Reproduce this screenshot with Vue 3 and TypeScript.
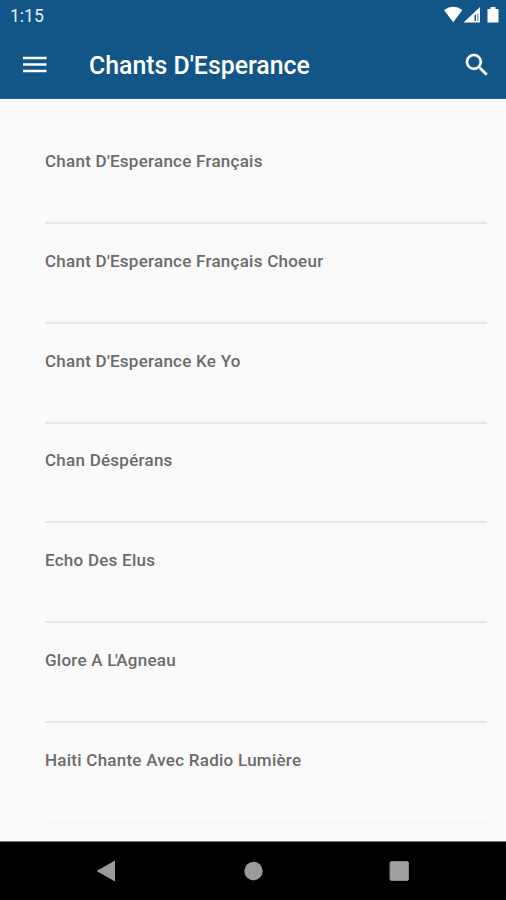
<script setup lang="ts">
interface Song { lead: string; tight?: string; rest?: string }

const songs: Song[] = [
  { lead: "Chant D'Esperance Français" },
  { lead: "Chant D'Esperance Français Choeur" },
  { lead: "Chant D'Esperance Ke Yo" },
  { lead: 'Chan Déspérans' },
  { lead: 'Echo Des Elus' },
  { lead: 'Glore A ', tight: "L'", rest: 'Agneau' },
  { lead: 'Haiti Chante Avec Radio Lumière' },
]
</script>

<template>
  <div class="screen">
    <header class="top">
      <div class="status">
        <span class="time">1:15</span>
        <svg class="signals" width="56" height="18" viewBox="0 0 56 18">
          <path d="M0 4Q9.200-2.500 18.400 4L9.200 16.300Z" fill="#fff" />
          <path fill-rule="evenodd" d="M19.500 16.500L36 1V16.500ZM30.500 9.500V15H32V8ZM33.500 7.500V15H34.300V7.500Z" fill="#fff" />
          <path d="M43.500 3h3V1h5v2h3V16.500H43.500Z" fill="#fff" />
        </svg>
      </div>
      <div class="toolbar">
        <svg class="menu" width="24" height="18" viewBox="0 0 24 18">
          <path d="M0 2H23.500M0 8.500H23.500M0 15H23.500" stroke="#fff" stroke-width="2.600" />
        </svg>
        <h1>Chants D'Esperance</h1>
        <svg class="search" width="30" height="30" viewBox="0 0 24 24">
          <path fill="#fff" stroke="#fff" stroke-width=".2" d="M15.500 14h-.79l-.28-.27A6.470 6.470 0 0 0 16 9.500 6.500 6.500 0 1 0 9.500 16c1.610 0 3.090-.59 4.230-1.570l.27.28v.79l5 4.990L20.490 19l-4.990-5zm-6 0C7.010 14 5 11.990 5 9.500S7.010 5 9.500 5 14 7.010 14 9.500 11.990 14 9.500 14z" />
        </svg>
      </div>
    </header>
    <ul class="list">
      <li v-for="(song, i) in songs" :key="i">{{ song.lead }}<span v-if="song.tight" class="tight">{{ song.tight }}</span>{{ song.rest }}</li>
    </ul>
    <nav class="nav">
      <svg width="20" height="22" viewBox="0 0 20 22"><path d="M.5 11L19 .5V21.500Z" fill="#9b9b9b" /></svg>
      <svg width="20" height="20" viewBox="0 0 20 20"><circle cx="10.500" cy="10" r="9.200" fill="#9b9b9b" /></svg>
      <svg width="20" height="20" viewBox="0 0 20 20"><rect x="1" y=".5" width="18.500" height="19" rx="1.500" fill="#a0a0a0" stroke="#898989" /></svg>
    </nav>
  </div>
</template>

<style>
body { margin: 0; }
</style>

<style scoped>
.screen { width: 506px; height: 900px; display: flex; flex-direction: column; overflow: hidden; background: #fafafa; font-family: Roboto, sans-serif; }
.top { height: 99px; flex: none; background: #125688; color: #fff; border-bottom: 1px solid #2f5f8d; box-sizing: border-box; }
.status { height: 32px; display: flex; justify-content: space-between; align-items: center; padding: 0 6.500px 0 10px; box-sizing: border-box; }
.signals { position: relative; top: -1px; }
.time { font-size: 17.500px; color: #e4edf4; }
.toolbar { height: 65px; display: flex; align-items: center; padding: 0 14px 0 23px; box-sizing: border-box; }
h1 { margin: 1px 0 0 42px; font-size: 24.850px; font-weight: 500; flex: 1; white-space: nowrap; }
.list { list-style: none; margin: 0; padding: 25px 19px 0 45px; flex: 1; min-height: 0; overflow: hidden; }
li { height: 99.850px; box-sizing: border-box; border-bottom: 2px solid #e6e6e6; padding-top: 25.900px; font-size: 17px; letter-spacing: .25px; line-height: 22px; font-weight: 500; color: #6b6b6b; white-space: nowrap; }
li:last-child { border-bottom-color: #f6f6f6; }
.tight { letter-spacing: -1.500px; }
.nav { height: 59px; flex: none; background: #000; border-top: 1px solid #777; display: flex; align-items: center; justify-content: space-between; padding: 0 97px 0 96px; box-sizing: border-box; }
</style>
